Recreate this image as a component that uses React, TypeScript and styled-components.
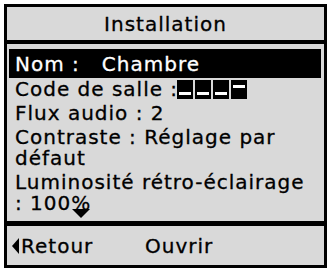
import React from 'react';
import styled, { createGlobalStyle } from 'styled-components';

const GlobalStyle = createGlobalStyle`
  html, body {
    margin: 0;
    padding: 0;
    background: #ffffff;
  }
  body {
    font-family: 'DejaVu Sans', Verdana, sans-serif;
  }
`;

const Page = styled.div`
  padding: 4px;
  width: 329px;
  height: 270px;
  box-sizing: border-box;
`;

const Screen = styled.div`
  width: 323px;
  height: 264px;
  box-sizing: border-box;
  border: 3px solid #000;
  background: #d9d9d9;
  display: flex;
  flex-direction: column;
  color: #000;
  font-size: 20px;
  letter-spacing: 1px;
  -webkit-text-stroke: 0.3px currentColor;
`;

const Header = styled.div`
  height: 33px;
  border-bottom: 4px solid #000;
  display: flex;
  align-items: center;
  justify-content: center;
  flex-shrink: 0;
`;

const List = styled.div`
  position: relative;
  flex: 1;
  padding: 5px 3px 0 2px;
  overflow: hidden;
`;

const Item = styled.div<{ $selected?: boolean }>`
  padding: ${(p) => (p.$selected ? '5px 6px 3px' : '1px 6px 2px')};
  line-height: 21px;
  white-space: pre-wrap;
  background: ${(p) => (p.$selected ? '#000' : 'transparent')};
  color: ${(p) => (p.$selected ? '#fff' : '#000')};
`;

const Code = styled.span`
  display: inline-flex;
  gap: 2px;
  vertical-align: -3px;
  margin-left: -1px;
`;

const Digit = styled.span<{ $top?: boolean }>`
  position: relative;
  width: 16px;
  height: 19px;
  background: #000;
  &::after {
    content: '';
    position: absolute;
    left: 2px;
    right: 2px;
    height: 3px;
    background: #fff;
    top: ${(p) => (p.$top ? '5px' : '12px')};
  }
`;

const MoreArrow = styled.div`
  position: absolute;
  left: 65px;
  bottom: 3px;
  width: 0;
  height: 0;
  border-left: 9px solid transparent;
  border-right: 9px solid transparent;
  border-top: 9px solid #000;
`;

const Footer = styled.div`
  height: 39px;
  border-top: 5px solid #000;
  display: flex;
  align-items: center;
  padding-left: 5px;
  flex-shrink: 0;
`;

const SoftKey = styled.span<{ $width?: number }>`
  display: inline-flex;
  align-items: center;
  width: ${(p) => (p.$width ? `${p.$width}px` : 'auto')};
`;

const BackArrow = styled.span`
  width: 0;
  height: 0;
  border-top: 8px solid transparent;
  border-bottom: 8px solid transparent;
  border-right: 7px solid #000;
  margin-right: 2px;
`;

export default function App() {
  return (
    <>
      <GlobalStyle />
      <Page>
        <Screen>
          <Header>Installation</Header>
          <List>
            <Item $selected>{'Nom :   Chambre'}</Item>
            <Item>
              Code de salle :
              <Code>
                <Digit />
                <Digit />
                <Digit />
                <Digit $top />
              </Code>
            </Item>
            <Item>Flux audio : 2</Item>
            <Item>Contraste : Réglage par défaut</Item>
            <Item>Luminosité rétro-éclairage : 100%</Item>
            <MoreArrow />
          </List>
          <Footer>
            <SoftKey $width={133}>
              <BackArrow />
              Retour
            </SoftKey>
            <SoftKey>Ouvrir</SoftKey>
          </Footer>
        </Screen>
      </Page>
    </>
  );
}
